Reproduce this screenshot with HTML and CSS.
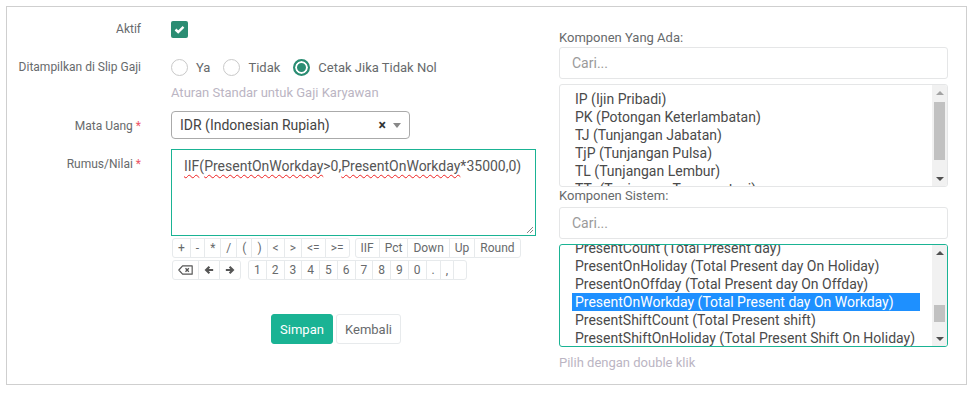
FILE: index.html
```html
<!DOCTYPE html>
<html lang="id">
<head>
    <meta charset="UTF-8">
    <meta name="viewport" content="width=device-width, initial-scale=1.0">
    <title>Komponen Gaji</title>
    <link rel="stylesheet" href="styles.css">
</head>
<body>
    <div class="panel">
        <div class="formLeft">
            <div class="row rowAktif">
                <label class="lbl">Aktif</label>
                <div class="ctl">
                    <span class="check">
                        <svg width="11" height="9" viewBox="0 0 11 9"><path d="M1.5 4.5 L4.2 7 L9.5 1.8" fill="none" stroke="#fff" stroke-width="2.4"/></svg>
                    </span>
                </div>
            </div>
            <div class="row rowSlip">
                <label class="lbl">Ditampilkan di Slip Gaji</label>
                <div class="ctl">
                    <div class="radios">
                        <span class="radio"></span><span class="radioText">Ya</span>
                        <span class="radio"></span><span class="radioText">Tidak</span>
                        <span class="radio on"></span><span class="radioText">Cetak Jika Tidak Nol</span>
                    </div>
                    <div class="help">Aturan Standar untuk Gaji Karyawan</div>
                </div>
            </div>
            <div class="row rowUang">
                <label class="lbl lblPad">Mata Uang <span class="req">*</span></label>
                <div class="ctl">
                    <div class="select2">
                        <span class="selText">IDR (Indonesian Rupiah)</span>
                        <span class="selClear">×</span>
                        <span class="selArrow"></span>
                    </div>
                </div>
            </div>
            <div class="row rowRumus">
                <label class="lbl lblPad">Rumus/Nilai <span class="req">*</span></label>
                <div class="ctl">
                    <div class="formula">
                        <span class="typo">IIF</span>(<span class="typo">PresentOnWorkday</span>&gt;0,<span class="typo">PresentOnWorkday</span>*35000,0)
                        <svg class="grip" width="8" height="8" viewBox="0 0 8 8"><path d="M7 1 L1 7 M7 4 L4 7" stroke="#888" stroke-width="1"/></svg>
                    </div>
                    <div class="keypad">
                        <div class="keyRow">
                            <div class="keyGroup">
                                <button class="key">+</button><button class="key">-</button><button class="key">*</button><button class="key">/</button><button class="key">(</button><button class="key">)</button><button class="key">&lt;</button><button class="key">&gt;</button><button class="key">&lt;=</button><button class="key">&gt;=</button>
                            </div>
                            <div class="keyGroup">
                                <button class="key">IIF</button><button class="key">Pct</button><button class="key">Down</button><button class="key">Up</button><button class="key">Round</button>
                            </div>
                        </div>
                        <div class="keyRow">
                            <div class="keyGroup">
                                <button class="key keyIcon wide">
                                    <svg width="18" height="12" viewBox="0 0 18 12"><path d="M5.5 1 H17 V11 H5.5 L1 6 Z" fill="none" stroke="#555" stroke-width="1.4" stroke-linejoin="round"/><path d="M9 4 L13 8 M13 4 L9 8" stroke="#555" stroke-width="1.6"/></svg>
                                </button>
                                <button class="key keyIcon">
                                    <svg width="12" height="12" viewBox="0 0 12 12"><path d="M11 6 H2.5 M6.5 2 L2.5 6 L6.5 10" fill="none" stroke="#555" stroke-width="2.6"/></svg>
                                </button>
                                <button class="key keyIcon">
                                    <svg width="12" height="12" viewBox="0 0 12 12"><path d="M1 6 H9.5 M5.5 2 L9.5 6 L5.5 10" fill="none" stroke="#555" stroke-width="2.6"/></svg>
                                </button>
                            </div>
                            <div class="keyGroup">
                                <button class="key">1</button><button class="key">2</button><button class="key">3</button><button class="key">4</button><button class="key">5</button><button class="key">6</button><button class="key">7</button><button class="key">8</button><button class="key">9</button><button class="key">0</button><button class="key">.</button><button class="key">,</button><button class="key blank"></button>
                            </div>
                        </div>
                    </div>
                </div>
            </div>
            <div class="actions">
                <button class="btn btnPrimary">Simpan</button>
                <button class="btn btnWhite">Kembali</button>
            </div>
        </div>

        <div class="formRight">
            <div class="sideLabel">Komponen Yang Ada:</div>
            <div class="search">Cari...</div>
            <div class="listbox">
                <div class="listBody">
                    <div class="opt">IP (Ijin Pribadi)</div>
                    <div class="opt">PK (Potongan Keterlambatan)</div>
                    <div class="opt">TJ (Tunjangan Jabatan)</div>
                    <div class="opt">TjP (Tunjangan Pulsa)</div>
                    <div class="opt">TL (Tunjangan Lembur)</div>
                    <div class="opt">TTr (Tunjangan Transportasi)</div>
                </div>
                <div class="scrollbar">
                    <div class="arrowUp off"></div>
                    <div class="gapOne"></div>
                    <div class="thumb thumbOne"></div>
                    <div class="track"></div>
                    <div class="arrowDown"></div>
                </div>
            </div>

            <div class="sideLabel labelTwo">Komponen Sistem:</div>
            <div class="search searchTwo">Cari...</div>
            <div class="listbox active">
                <div class="listBody scrolled">
                    <div class="opt">PresentCount (Total Present day)</div>
                    <div class="opt">PresentOnHoliday (Total Present day On Holiday)</div>
                    <div class="opt">PresentOnOffday (Total Present day On Offday)</div>
                    <div class="opt selected">PresentOnWorkday (Total Present day On Workday)</div>
                    <div class="opt">PresentShiftCount (Total Present shift)</div>
                    <div class="opt">PresentShiftOnHoliday (Total Present Shift On Holiday)</div>
                </div>
                <div class="scrollbar">
                    <div class="arrowUp"></div>
                    <div class="gapTwo"></div>
                    <div class="thumb thumbTwo"></div>
                    <div class="track"></div>
                    <div class="arrowDown"></div>
                </div>
            </div>
            <div class="help helpTwo">Pilih dengan double klik</div>
        </div>
    </div>
</body>
</html>
```

FILE: styles.css
```css
*{
    margin:0;
    padding:0;
    box-sizing:border-box;
}

body{
    font-family:Roboto, "Open Sans", sans-serif;
    font-size:13px;
    color:#676a6c;
    background:#fff;
}

.panel{
    display:flex;
    margin:6px 0 0 6px;
    width:961px;
    height:379px;
    border:1px solid #cfcfcf;
}

/* left side: form */
.formLeft{
    width:530px;
    padding-top:14px;
}
.row{
    display:flex;
}
.lbl{
    flex-shrink:0;
    width:134px;
    text-align:right;
    font-size:12px;
    line-height:16px;
}
.lblPad{
    padding-top:7px;
}
.req{
    color:#ed5565;
}
.ctl{
    margin-left:30px;
    width:365px;
}

.check{
    display:flex;
    justify-content:center;
    align-items:center;
    width:17px;
    height:17px;
    border-radius:2px;
    background:#2b8d73;
}

.rowSlip{
    margin-top:21px;
}
.radios{
    display:flex;
    align-items:center;
    height:17px;
}
.radio{
    width:17px;
    height:17px;
    border:1px solid #c9c9c9;
    border-radius:50%;
    background:#fff;
}
.radio.on{
    border:2px solid #2b8d73;
    background:#2b8d73;
    box-shadow:inset 0 0 0 2px #fff;
}
.radioText{
    margin:0 13px 0 8px;
    font-size:13px;
    color:#676a6c;
}
.help{
    margin-top:8px;
    line-height:17px;
    color:#bbb5c3;
}

.rowUang{
    margin-top:10px;
}
.select2{
    display:flex;
    align-items:center;
    width:239px;
    height:28px;
    padding:0 8px;
    border:1px solid #aaa;
    border-radius:4px;
    font-size:14px;
    color:#444;
}
.selText{
    flex:1;
}
.selClear{
    font-weight:bold;
    font-size:14px;
    color:#333;
    margin-right:7px;
}
.selArrow{
    width:0;
    height:0;
    border-left:4px solid transparent;
    border-right:4px solid transparent;
    border-top:5px solid #888;
}

.rowRumus{
    margin-top:10px;
}
.formula{
    position:relative;
    height:87px;
    padding:6px 12px;
    border:1px solid #1ab394;
    font-size:14px;
    line-height:20px;
    color:#555;
}
.typo{
    text-decoration:underline wavy #e22;
    text-decoration-thickness:1px;
    text-underline-offset:3px;
}
.grip{
    position:absolute;
    right:1px;
    bottom:1px;
}

.keypad{
    margin:2px 0 0 1px;
}
.keyRow{
    display:flex;
    gap:5px;
    margin-bottom:2px;
}
.keyRow + .keyRow{
    gap:7px;
}
.keyGroup{
    display:flex;
}
.key{
    height:20px;
    min-width:13px;
    padding:0 5px;
    margin-left:-1px;
    border:1px solid #e7eaec;
    background:#fff;
    font-family:Roboto, sans-serif;
    font-size:12px;
    color:#676a6c;
}
.key:first-child{
    margin-left:0;
    border-radius:3px 0 0 3px;
}
.key:last-child{
    border-radius:0 3px 3px 0;
}
.keyIcon{
    display:flex;
    align-items:center;
    justify-content:center;
    width:22px;
}
.keyIcon.wide{
    width:27px;
}
.blank{
    width:14px;
}

.actions{
    display:flex;
    gap:3px;
    margin:32px 0 0 264px;
}
.btn{
    height:30px;
    border-radius:3px;
    font-family:Roboto, sans-serif;
    font-size:13px;
}
.btnPrimary{
    width:62px;
    border:1px solid #1ab394;
    background:#1ab394;
    color:#fff;
}
.btnWhite{
    width:65px;
    border:1px solid #e7eaec;
    background:#fff;
    color:#676a6c;
}

/* right side: component pickers */
.formRight{
    width:389px;
    margin-left:22px;
    padding-top:22px;
}
.sideLabel{
    line-height:17px;
}
.labelTwo{
    margin-top:0;
}
.search{
    height:32px;
    margin-top:1px;
    padding:0 12px;
    border:1px solid #e5e6e7;
    border-radius:3px;
    font-size:14px;
    line-height:30px;
    color:#9a9a9a;
}
.searchTwo{
    margin-top:3px;
}
.listbox{
    display:flex;
    height:103px;
    margin-top:5px;
    border:1px solid #e5e6e7;
    border-radius:3px;
    overflow:hidden;
}
.listbox.active{
    border-color:#1ab394;
}
.listBody{
    flex:1;
    padding:5px 12px 0 12px;
    overflow:hidden;
}
.listBody.scrolled{
    padding-top:0;
}
.scrolled .opt:first-child{
    margin-top:-6px;
}
.opt{
    height:18px;
    padding:0 3px;
    font-size:14px;
    line-height:18px;
    color:#4a4a4a;
    white-space:nowrap;
}
.opt.selected{
    background:#1e90ff;
    color:#fff;
}

.scrollbar{
    display:flex;
    flex-direction:column;
    width:15px;
    background:#f1f1f1;
}
.arrowUp, .arrowDown{
    display:flex;
    justify-content:center;
    align-items:center;
    height:15px;
}
.arrowUp::after{
    content:"";
    border-left:4px solid transparent;
    border-right:4px solid transparent;
    border-bottom:4px solid #505050;
}
.arrowUp.off::after{
    border-bottom-color:#a3a3a3;
}
.arrowDown::after{
    content:"";
    border-left:4px solid transparent;
    border-right:4px solid transparent;
    border-top:4px solid #505050;
}
.thumb{
    margin:0 2px;
    background:#c1c1c1;
}
.gapOne{
    height:2px;
}
.thumbOne{
    height:58px;
}
.gapTwo{
    height:45px;
}
.thumbTwo{
    height:17px;
}
.track{
    flex:1;
}
.helpTwo{
    margin-top:7px;
}
```
